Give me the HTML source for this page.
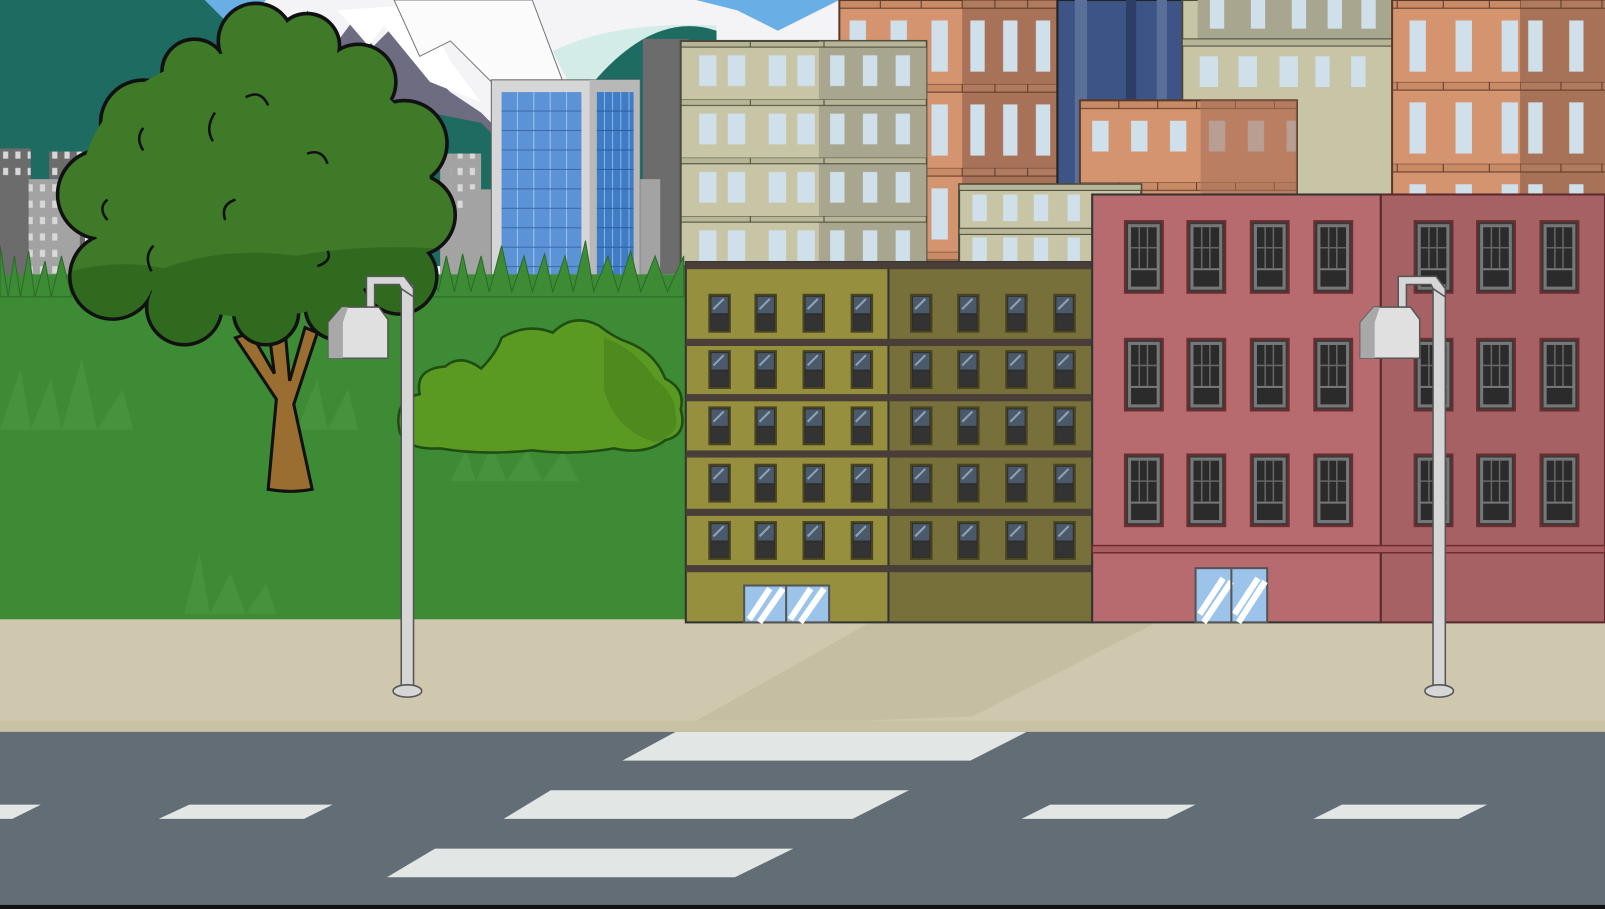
<!DOCTYPE html>
<html><head><meta charset="utf-8"><style>
html,body{margin:0;padding:0;background:#000}
svg{display:block}
</style></head><body>
<svg width="1605" height="909" viewBox="0 0 1568 888" preserveAspectRatio="none" xmlns="http://www.w3.org/2000/svg">
<defs>
<pattern id="beige" x="665" y="40" width="68" height="57" patternUnits="userSpaceOnUse">
<rect width="68" height="57" fill="#c8c5a6"/>
<rect x="0" y="0" width="68" height="6" fill="#b8b597" stroke="#4a4a3c" stroke-width="1"/>
<rect x="18" y="14" width="17" height="30" fill="#cfe0ea"/>
<rect x="46" y="14" width="17" height="30" fill="#cfe0ea"/>
</pattern>
<pattern id="beige2" x="805" y="40" width="100" height="57" patternUnits="userSpaceOnUse">
<rect width="100" height="57" fill="#a9a690"/>
<rect x="0" y="0" width="100" height="6" fill="#b8b597" stroke="#4a4a3c" stroke-width="1"/>
<rect x="6" y="14" width="14" height="30" fill="#cfe0ea"/>
<rect x="38" y="14" width="14" height="30" fill="#cfe0ea"/>
<rect x="70" y="14" width="14" height="30" fill="#cfe0ea"/>
</pattern>
<pattern id="brick" x="820" y="0" width="40" height="82" patternUnits="userSpaceOnUse">
<rect width="40" height="82" fill="#d59470"/>
<rect x="10" y="20" width="16" height="50" fill="#cfe0ea"/>
<rect y="0" width="40" height="8" fill="#c98a66" stroke="#5a3a2a" stroke-width="1"/>
</pattern>
<pattern id="brickd" x="940" y="0" width="32" height="82" patternUnits="userSpaceOnUse">
<rect width="32" height="82" fill="#a87259"/>
<rect x="8" y="20" width="14" height="50" fill="#cfe0ea"/>
<rect y="0" width="32" height="8" fill="#b07a5f" stroke="#5a3a2a" stroke-width="1"/>
</pattern>
<pattern id="brick2" x="1365" y="0" width="45" height="80" patternUnits="userSpaceOnUse">
<rect width="45" height="80" fill="#d59470"/>
<rect x="12" y="20" width="16" height="50" fill="#cfe0ea"/>
<rect y="0" width="45" height="8" fill="#c98a66" stroke="#5a3a2a" stroke-width="1"/>
</pattern>
<pattern id="brick2d" x="1485" y="0" width="40" height="80" patternUnits="userSpaceOnUse">
<rect width="40" height="80" fill="#a87259"/>
<rect x="8" y="20" width="14" height="50" fill="#cfe0ea"/>
<rect y="0" width="40" height="8" fill="#b07a5f" stroke="#5a3a2a" stroke-width="1"/>
</pattern>
<pattern id="brick3" x="1055" y="98" width="38" height="80" patternUnits="userSpaceOnUse">
<rect width="38" height="80" fill="#d59470"/>
<rect x="12" y="20" width="16" height="30" fill="#cfe0ea"/>
<rect y="0" width="38" height="8" fill="#c98a66" stroke="#5a3a2a" stroke-width="1"/>
</pattern>
<pattern id="glass" x="490" y="90" width="16" height="19" patternUnits="userSpaceOnUse">
<rect width="16" height="19" fill="#5b93d6"/>
<rect x="15" width="1" height="19" fill="#9fc2ea"/>
<rect y="18" width="16" height="1" fill="#3a6aa8"/>
</pattern>
<pattern id="glass2" x="583" y="90" width="8" height="19" patternUnits="userSpaceOnUse">
<rect width="8" height="19" fill="#3f7cc6"/>
<rect x="7" width="1" height="19" fill="#8db4e4"/>
<rect y="18" width="8" height="1" fill="#2d5d9a"/>
</pattern>
<pattern id="cityw" x="0" y="0" width="12" height="16" patternUnits="userSpaceOnUse">
<rect x="3" y="4" width="5" height="7" fill="#d8d8d8"/>
</pattern>
<g id="ow">
<rect x="0" y="0" width="20" height="36" fill="#2e2e2e" stroke="#4a4520" stroke-width="2"/>
<rect x="2" y="2" width="16" height="16" fill="#4a5a6a"/>
<path d="M4 14 L14 4" stroke="#8fa3b8" stroke-width="2"/>
<rect x="2" y="20" width="16" height="14" fill="#333"/>
</g>
<g id="rw">
<rect x="0" y="0" width="37" height="70" fill="#3a3a3a" stroke="#6e2e30" stroke-width="2"/>
<rect x="3" y="3" width="31" height="64" fill="#777"/>
<rect x="6" y="6" width="25" height="40" fill="#2b2b2b"/>
<path d="M14 6V46M22 6V46M6 26H31" stroke="#666" stroke-width="1.5"/>
<rect x="6" y="48" width="25" height="16" fill="#2b2b2b"/>
</g>
<g id="lamp">
<rect x="-6" y="8" width="12" height="397" fill="#d6d6d6" stroke="#555" stroke-width="1.5"/>
<ellipse cx="0" cy="405" rx="14" ry="6" fill="#d6d6d6" stroke="#555" stroke-width="1.5"/>
<path d="M6 20 L6 12 L-3 0 L-40 0 L-40 30 L-32 30 L-32 8 L-8 8 L-6 12Z" fill="#d6d6d6" stroke="#555" stroke-width="1.5"/>
<path d="M-45 30 L-28 30 L-19 42 L-19 80 L-77 80 L-77 45 L-64 30Z" fill="#e0e0e0" stroke="#555" stroke-width="1.5"/>
<path d="M-77 45 L-64 30 L-58 30 L-63 45 L-63 80 L-77 80Z" fill="#a8a8a8"/>
</g>
<clipPath id="canopy">
<circle cx="250" cy="40" r="35"/><circle cx="300" cy="45" r="30"/><circle cx="190" cy="70" r="30"/>
<circle cx="350" cy="80" r="35"/><circle cx="140" cy="120" r="40"/><circle cx="395" cy="140" r="40"/>
<circle cx="100" cy="190" r="42"/><circle cx="405" cy="210" r="38"/><circle cx="110" cy="270" r="40"/>
<circle cx="390" cy="270" r="35"/><circle cx="180" cy="300" r="35"/><circle cx="260" cy="305" r="30"/><circle cx="330" cy="300" r="30"/>
<ellipse cx="250" cy="180" rx="170" ry="130"/>
</clipPath>
</defs>

<!-- sky -->
<rect width="1568" height="300" fill="#f4f4f6"/>
<path d="M180 0 L260 0 L230 30Z" fill="#6aaee6"/>
<path d="M680 0 L820 0 L760 30 L720 10Z" fill="#6aaee6"/>
<path d="M540 50 Q600 20 700 25 L700 90 L560 90Z" fill="#d3ece8"/>
<!-- mountains -->
<path d="M0 0 L200 0 L240 40 L240 200 L0 200Z" fill="#1e6b62"/>
<path d="M300 10 L330 40 L345 20 L365 45 L380 30 L440 90 L470 110 L500 140 L500 250 L280 250Z" fill="#6d6c80"/>
<path d="M330 10 L360 45 L375 25 L420 80 L470 100 L440 60 L420 20 L400 5Z" fill="#fff"/>
<path d="M385 0 L520 0 L550 80 L480 80 L440 40 L410 55Z" fill="#fbfbfb" stroke="#777" stroke-width="1"/>
<path d="M420 110 L470 120 L500 150 L500 260 L420 260Z" fill="#1e6b62"/>
<path d="M580 80 Q640 10 700 30 L700 260 L600 260Z" fill="#1e6b62"/>
<!-- far city -->
<rect x="0" y="145" width="30" height="150" fill="#6c6c6c"/>
<rect x="0" y="145" width="30" height="30" fill="url(#cityw)"/>
<rect x="48" y="148" width="35" height="150" fill="#6c6c6c"/>
<rect x="48" y="148" width="35" height="30" fill="url(#cityw)"/>
<rect x="28" y="175" width="50" height="130" fill="#a3a3a3"/>
<rect x="28" y="175" width="30" height="120" fill="url(#cityw)"/>
<rect x="105" y="120" width="30" height="180" fill="#6c6c6c"/>
<rect x="430" y="150" width="40" height="150" fill="#a3a3a3"/>
<rect x="440" y="150" width="25" height="60" fill="url(#cityw)"/>
<rect x="455" y="185" width="30" height="110" fill="#a3a3a3"/>
<rect x="628" y="38" width="45" height="230" fill="#6c6c6c"/>
<rect x="625" y="175" width="20" height="95" fill="#a3a3a3"/>
<!-- glass tower -->
<rect x="480" y="78" width="145" height="205" fill="#d6d6d6" stroke="#666" stroke-width="1"/>
<rect x="576" y="78" width="49" height="205" fill="#b8b8b8"/>
<rect x="490" y="90" width="78" height="193" fill="url(#glass)"/>
<rect x="583" y="90" width="36" height="193" fill="url(#glass2)"/>
<!-- background buildings right -->
<rect x="820" y="0" width="213" height="260" fill="url(#brick)" stroke="#5a3a2a" stroke-width="2"/>
<rect x="940" y="0" width="93" height="260" fill="url(#brickd)"/>
<rect x="1033" y="0" width="140" height="195" fill="#3c5486" stroke="#222" stroke-width="2"/>
<rect x="1050" y="0" width="12" height="195" fill="#5a7098"/>
<rect x="1100" y="0" width="10" height="195" fill="#2c3e66"/>
<rect x="1130" y="0" width="10" height="195" fill="#5a7098"/>
<rect x="1155" y="0" width="215" height="195" fill="#c8c5a6" stroke="#4a4a3c" stroke-width="2"/>
<rect x="1170" y="0" width="190" height="38" fill="#a9a690"/>
<g fill="#cfe0ea"><rect x="1182" y="0" width="14" height="28"/><rect x="1222" y="0" width="14" height="28"/><rect x="1262" y="0" width="14" height="28"/><rect x="1297" y="0" width="14" height="28"/><rect x="1330" y="0" width="14" height="28"/>
<rect x="1172" y="55" width="18" height="30"/><rect x="1210" y="55" width="18" height="30"/><rect x="1250" y="55" width="18" height="30"/><rect x="1285" y="55" width="14" height="30"/><rect x="1320" y="55" width="14" height="30"/></g>
<rect x="1155" y="38" width="210" height="7" fill="#b8b597" stroke="#4a4a3c" stroke-width="1"/>
<rect x="1360" y="0" width="208" height="195" fill="url(#brick2)" stroke="#5a3a2a" stroke-width="2"/>
<rect x="1485" y="0" width="83" height="195" fill="url(#brick2d)"/>
<rect x="1055" y="98" width="212" height="100" fill="url(#brick3)" stroke="#5a3a2a" stroke-width="2"/>
<rect x="1173" y="98" width="94" height="100" fill="#a87259" opacity="0.6"/>
<rect x="665" y="40" width="240" height="220" fill="url(#beige)" stroke="#4a4a3c" stroke-width="2"/>
<rect x="800" y="40" width="105" height="220" fill="url(#beige2)"/>
<rect x="937" y="180" width="178" height="80" fill="#c8c5a6" stroke="#4a4a3c" stroke-width="2"/>
<rect x="937" y="180" width="178" height="6" fill="#b8b597" stroke="#4a4a3c" stroke-width="1"/>
<rect x="937" y="223" width="178" height="6" fill="#b8b597" stroke="#4a4a3c" stroke-width="1"/>
<g fill="#cfe0ea"><rect x="950" y="190" width="14" height="26"/><rect x="980" y="190" width="14" height="26"/><rect x="1010" y="190" width="14" height="26"/><rect x="1043" y="190" width="12" height="26"/><rect x="950" y="232" width="14" height="26"/><rect x="980" y="232" width="14" height="26"/><rect x="1010" y="232" width="14" height="26"/><rect x="1043" y="232" width="12" height="26"/></g>

<!-- grass -->
<rect x="0" y="268" width="672" height="340" fill="#3e8b35"/>
<path d="M0 240 L8 290 L14 250 L20 290 L28 245 L34 290 L44 255 L50 290 L60 250 L70 290 L0 290Z M420 245 L428 285 L436 250 L444 285 L452 248 L460 285 L470 250 L478 285 L490 240 L500 285 L512 250 L520 285 L532 248 L540 285 L552 250 L560 285 L572 235 L580 285 L594 250 L604 285 L616 245 L626 285 L640 250 L652 285 L668 250 L668 290 L420 290Z" fill="#3e8b35" stroke="#2a6a2a" stroke-width="1"/>
<g fill="#4c9a42" opacity="0.6">
<path d="M0 420 L20 360 L30 420 L50 370 L60 420 L80 350 L95 420 L120 380 L130 420Z"/>
<path d="M440 470 L455 440 L465 470 L480 435 L495 470 L515 440 L530 470 L550 440 L565 470Z"/>
<path d="M180 600 L195 540 L205 600 L225 560 L240 600 L260 570 L270 600Z"/>
<path d="M290 420 L310 370 L320 420 L340 380 L350 420Z"/>
</g>

<!-- tree -->
<path d="M262 478 L270 390 L230 330 L245 325 L268 365 L262 318 L278 318 L283 372 L298 320 L310 325 L287 395 L305 478 Q285 482 262 478Z" fill="#9a6e31" stroke="#111" stroke-width="3"/>
<g stroke="#111" stroke-width="7" fill="#3f7a28">
<circle cx="250" cy="40" r="35"/><circle cx="300" cy="45" r="30"/><circle cx="190" cy="70" r="30"/>
<circle cx="350" cy="80" r="35"/><circle cx="140" cy="120" r="40"/><circle cx="395" cy="140" r="40"/>
<circle cx="100" cy="190" r="42"/><circle cx="405" cy="210" r="38"/><circle cx="110" cy="270" r="40"/>
<circle cx="390" cy="270" r="35"/><circle cx="180" cy="300" r="35"/><circle cx="260" cy="305" r="30"/><circle cx="330" cy="300" r="30"/>
</g>
<g clip-path="url(#canopy)">
<rect x="40" y="0" width="420" height="350" fill="#3f7a28"/>
<path d="M40 275 Q100 250 160 262 Q220 240 290 250 Q360 236 460 245 L460 350 L40 350Z" fill="#2f6a1e"/>
</g>
<g fill="none" stroke="#111" stroke-width="2.5">
<path d="M140 125 q-8 10 0 22 M210 110 q-10 15 -2 28 M240 95 q15 -8 22 8 M300 150 q15 -5 20 10 M230 195 q-15 5 -10 20 M105 195 q-10 8 0 20 M150 240 q-10 10 -2 25 M310 260 q15 -5 10 -15"/>
</g>

<!-- bush -->
<path d="M390 420 Q385 390 410 385 Q405 360 435 358 Q450 345 470 360 Q485 345 490 330 Q515 315 540 325 Q560 305 585 318 Q600 330 615 335 Q640 345 650 370 Q670 380 665 400 Q672 425 650 430 Q630 445 600 438 Q560 445 520 440 Q470 445 430 438 Q395 440 390 420Z" fill="#5b9a22" stroke="#1f4d12" stroke-width="2.5"/>
<path d="M590 330 Q620 340 640 370 Q660 385 660 405 Q665 425 640 432 Q600 420 590 380Z" fill="#4e8a1d"/>

<!-- sidewalk & road -->
<rect x="0" y="605" width="1568" height="110" fill="#cfc8ae"/>
<path d="M670 710 L850 608 L1130 608 L950 700Z" fill="#bdb69b" opacity="0.55"/>
<rect x="0" y="704" width="1568" height="11" fill="#c8c1a4"/>
<rect x="0" y="715" width="1568" height="173" fill="#636d76"/>
<rect x="0" y="884" width="1568" height="4" fill="#111"/>
<g fill="#e2e6e4">
<path d="M660 715 L1003 715 L948 743 L608 743Z"/>
<path d="M538 772 L888 772 L833 800 L492 800Z"/>
<path d="M425 829 L775 829 L718 857 L378 857Z"/>
<path d="M0 786 L40 786 L12 800 L0 800Z"/>
<path d="M185 786 L325 786 L297 800 L155 800Z"/>
<path d="M1026 786 L1168 786 L1140 800 L998 800Z"/>
<path d="M1311 786 L1453 786 L1425 800 L1283 800Z"/>
</g>

<!-- olive building -->
<rect x="670" y="256" width="198" height="352" fill="#958f3e" stroke="#333" stroke-width="2"/>
<rect x="868" y="256" width="199" height="352" fill="#77703a" stroke="#333" stroke-width="2"/>
<g fill="#4a3f38">
<rect x="670" y="256" width="397" height="7"/>
<rect x="670" y="331" width="397" height="7"/>
<rect x="670" y="385" width="397" height="7"/>
<rect x="670" y="440" width="397" height="7"/>
<rect x="670" y="497" width="397" height="7"/>
<rect x="670" y="552" width="397" height="7"/>
</g>
<g>
<use href="#ow" x="693" y="288"/><use href="#ow" x="738" y="288"/><use href="#ow" x="785" y="288"/><use href="#ow" x="832" y="288"/><use href="#ow" x="890" y="288"/><use href="#ow" x="936" y="288"/><use href="#ow" x="983" y="288"/><use href="#ow" x="1030" y="288"/>
<use href="#ow" x="693" y="343"/><use href="#ow" x="738" y="343"/><use href="#ow" x="785" y="343"/><use href="#ow" x="832" y="343"/><use href="#ow" x="890" y="343"/><use href="#ow" x="936" y="343"/><use href="#ow" x="983" y="343"/><use href="#ow" x="1030" y="343"/>
<use href="#ow" x="693" y="398"/><use href="#ow" x="738" y="398"/><use href="#ow" x="785" y="398"/><use href="#ow" x="832" y="398"/><use href="#ow" x="890" y="398"/><use href="#ow" x="936" y="398"/><use href="#ow" x="983" y="398"/><use href="#ow" x="1030" y="398"/>
<use href="#ow" x="693" y="454"/><use href="#ow" x="738" y="454"/><use href="#ow" x="785" y="454"/><use href="#ow" x="832" y="454"/><use href="#ow" x="890" y="454"/><use href="#ow" x="936" y="454"/><use href="#ow" x="983" y="454"/><use href="#ow" x="1030" y="454"/>
<use href="#ow" x="693" y="510"/><use href="#ow" x="738" y="510"/><use href="#ow" x="785" y="510"/><use href="#ow" x="832" y="510"/><use href="#ow" x="890" y="510"/><use href="#ow" x="936" y="510"/><use href="#ow" x="983" y="510"/><use href="#ow" x="1030" y="510"/>
</g>
<rect x="727" y="572" width="83" height="36" fill="#9cc3ea" stroke="#555" stroke-width="2"/>
<path d="M732 605 L752 575 M742 608 L765 575 M772 605 L792 575 M782 608 L805 575" stroke="#fff" stroke-width="6"/>
<rect x="767" y="572" width="2" height="36" fill="#555"/>

<!-- red building -->
<rect x="1067" y="190" width="282" height="418" fill="#b76b6e" stroke="#333" stroke-width="2"/>
<rect x="1349" y="190" width="219" height="418" fill="#a56163" stroke="#5a2a2c" stroke-width="2"/>
<rect x="1067" y="533" width="501" height="7" fill="#a85d60" stroke="#6e2e30" stroke-width="1.5"/>
<g>
<use href="#rw" x="1099" y="216"/><use href="#rw" x="1160" y="216"/><use href="#rw" x="1222" y="216"/><use href="#rw" x="1284" y="216"/><use href="#rw" x="1382" y="216"/><use href="#rw" x="1443" y="216"/><use href="#rw" x="1505" y="216"/>
<use href="#rw" x="1099" y="331"/><use href="#rw" x="1160" y="331"/><use href="#rw" x="1222" y="331"/><use href="#rw" x="1284" y="331"/><use href="#rw" x="1382" y="331"/><use href="#rw" x="1443" y="331"/><use href="#rw" x="1505" y="331"/>
<use href="#rw" x="1099" y="444"/><use href="#rw" x="1160" y="444"/><use href="#rw" x="1222" y="444"/><use href="#rw" x="1284" y="444"/><use href="#rw" x="1382" y="444"/><use href="#rw" x="1443" y="444"/><use href="#rw" x="1505" y="444"/>
</g>
<rect x="1168" y="555" width="70" height="53" fill="#9cc3ea" stroke="#555" stroke-width="2"/>
<path d="M1172 600 L1195 565 M1176 608 L1203 568 M1206 600 L1229 565 M1210 608 L1236 568" stroke="#fff" stroke-width="6"/>
<rect x="1202" y="555" width="2" height="53" fill="#555"/>

<!-- lamps -->
<use href="#lamp" x="398" y="270"/>
<use href="#lamp" x="1406" y="270"/>
</svg>
</body></html>
